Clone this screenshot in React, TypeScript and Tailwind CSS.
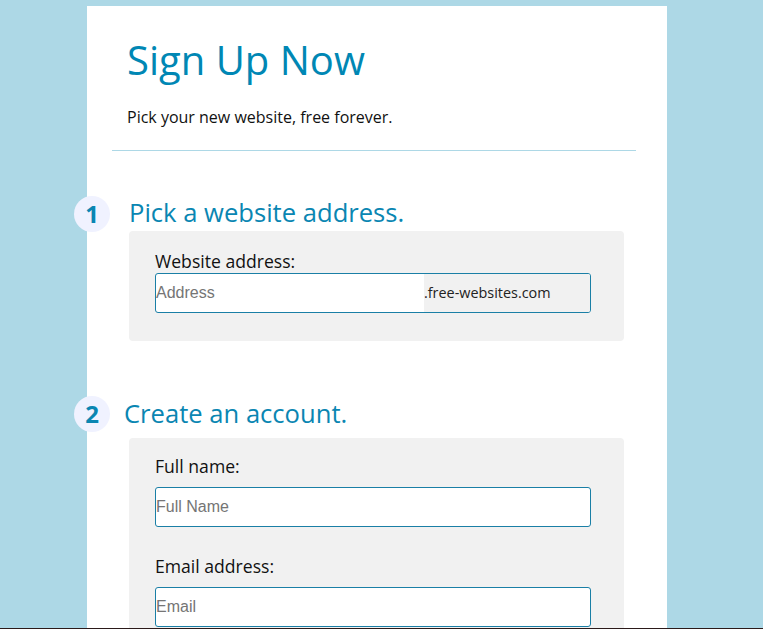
// App.tsx
const font = { fontFamily: '"Open Sans", "Noto Sans", sans-serif' };

const StepBadge = ({ n }: { n: number }) => (
  <div className="ml-[-13px] w-[36px] h-[36px] rounded-full bg-[#f0f2ff] flex items-center justify-center text-[24px] font-bold text-[#0a86b2] shrink-0">
    {n}
  </div>
);

const Field = ({ label, placeholder }: { label: string; placeholder: string }) => (
  <div>
    <label className="block text-[17.6px] leading-[24px] text-[#111] mb-[9px]">{label}</label>
    <input
      placeholder={placeholder}
      className="block w-[436px] h-[40px] border border-[#1a7fa6] rounded-[3px] bg-white px-0 text-[16px] placeholder:text-[#757575] outline-none font-['Liberation_Sans',Arial,sans-serif]"
    />
  </div>
);

export default function App() {
  return (
    <div className="min-h-screen bg-[#add8e6] pt-[6px] font-['Open_Sans','Noto_Sans',sans-serif]" style={font}>
      <div className="ml-[87px] w-[580px] bg-white min-h-[700px] pb-10">
        {/* Header */}
        <h1 className="pl-[40px] pt-[30px] text-[40px] leading-[48px] text-[#0087b4]">Sign Up Now</h1>
        <p className="pl-[40px] mt-[21px] text-[16px] leading-[24px] text-[#111]">
          Pick your new website, free forever.
        </p>
        <hr className="ml-[25px] w-[524px] mt-[21px] border-0 border-t border-[#add8e6]" />

        {/* Step 1 */}
        <div className="flex items-center mt-[45px]">
          <StepBadge n={1} />
          <h2 className="ml-[19px] text-[25.6px] leading-[36px] text-[#0a86b2] mt-[-2px]">Pick a website address.</h2>
        </div>
        <div className="ml-[42px] w-[495px] h-[110px] mt-[-1px] bg-[#f1f1f1] rounded-[4px] pl-[26px] pt-[18px]">
          <label className="block text-[17.6px] leading-[24px] text-[#111]">Website address:</label>
          <div className="flex w-[436px] h-[40px] border border-[#1a7fa6] rounded-[3px] bg-white overflow-hidden">
            <input
              placeholder="Address"
              className="w-[268px] h-full px-0 text-[16px] placeholder:text-[#757575] outline-none font-['Liberation_Sans',Arial,sans-serif]"
            />
            <div className="flex-1 bg-[#f1f1f1] flex items-center text-[14.4px] text-[#222]">.free-websites.com</div>
          </div>
        </div>

        {/* Step 2 */}
        <div className="flex items-center mt-[55px]">
          <StepBadge n={2} />
          <h2 className="ml-[14px] text-[25.6px] leading-[36px] text-[#0a86b2]">Create an account.</h2>
        </div>
        <div className="ml-[42px] w-[495px] mt-[6px] bg-[#f1f1f1] rounded-[4px] pl-[26px] pt-[16px] pb-[30px] flex flex-col gap-[27px]">
          <Field label="Full name:" placeholder="Full Name" />
          <Field label="Email address:" placeholder="Email" />
        </div>
      </div>
      <div className="fixed left-0 right-0 bottom-0 h-px bg-[#2b1a1a]" />
    </div>
  );
}
